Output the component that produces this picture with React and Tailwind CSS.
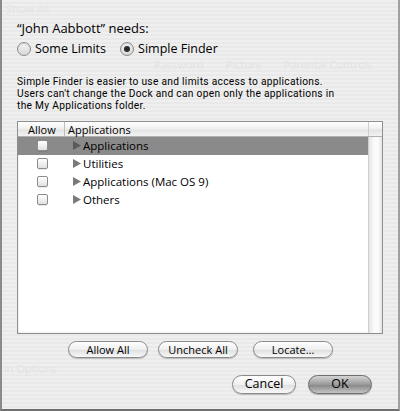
import React from "react";

const font = { fontFamily: '"Lucida Grande", "Open Sans", "DejaVu Sans", sans-serif' };

const rows = [
  { name: "Applications", selected: true },
  { name: "Utilities" },
  { name: "Applications (Mac OS 9)" },
  { name: "Others" },
];

function Radio({ checked, label }) {
  return (
    <div className="flex items-center gap-[4px]">
      <span className="w-[14px] h-[14px] rounded-full border border-[#8c8c8c] bg-[linear-gradient(#f4f4f4,#d8d8d8)] flex items-center justify-center shadow-[inset_0_1px_1px_rgba(0,0,0,0.15)]">
        {checked && <span className="w-[6px] h-[6px] rounded-full bg-[#2a2a2a]" />}
      </span>
      <span className="text-[12.5px] text-black">{label}</span>
    </div>
  );
}

function PillButton({ children, w, h = 17, primary }) {
  return (
    <button
      className={
        "rounded-full border text-[11px] leading-none text-black flex items-center justify-center " +
        (primary
          ? "border-[#6e6e6e] bg-[linear-gradient(#d4d4d4,#9a9a9a_50%,#8a8a8a_55%,#c4c4c4)] shadow-[0_1px_1px_rgba(0,0,0,0.25)]"
          : "border-[#8a8a8a] bg-[linear-gradient(#ffffff,#efefef_50%,#e0e0e0_55%,#f8f8f8)] shadow-[0_1px_1px_rgba(0,0,0,0.2)]")
      }
      style={{ width: w, height: h }}
    >
      {children}
    </button>
  );
}

export default function App() {
  return (
    <div
      style={font}
      className="relative w-[400px] h-[411px] overflow-hidden bg-[repeating-linear-gradient(#efefef_0px,#efefef_2px,#e9e9e9_2px,#e9e9e9_4px)] border-l-2 border-r-2 border-b-2 border-l-[#8a8a8a] border-r-[#a0a0a0] border-b-[#6f6f6f]"
    >
      {/* faint text of the window behind the sheet */}
      <div className="absolute inset-0 text-[#e3e3e3] pointer-events-none select-none">
        <div className="absolute left-[4px] top-[2px] text-[11px] leading-[14px]">Show All</div>
        <div className="absolute left-[152px] top-[59px] text-[11px] leading-[12px] flex gap-[22px]">
          <span>Password</span>
          <span>Picture</span>
          <span>Parental Controls</span>
        </div>
        <div className="absolute left-[2px] top-[362px] text-[11px] leading-[14px]">in Options</div>
      </div>

      <div className="relative flex flex-col pl-[15px] pr-[15px] pt-[20px]">
        <div className="text-[13px] leading-[16px] text-black">“John Aabbott” needs:</div>

        <div className="flex items-center gap-[14px] mt-[4px]">
          <Radio label="Some Limits" />
          <Radio checked label="Simple Finder" />
        </div>

        <div
          className="mt-[17px] text-[10.2px] leading-[12px] tracking-[0.3px] text-black"
          style={{ fontFamily: 'Roboto, "Liberation Sans", sans-serif' }}
        >
          <div>Simple Finder is easier to use and limits access to applications.</div>
          <div>Users can't change the Dock and can open only the applications in</div>
          <div>the My Applications folder.</div>
        </div>

        {/* table */}
        <div className="mt-[9px] w-[366px] h-[213px] border border-[#8e8e8e] bg-white flex flex-col shadow-[inset_0_0_2px_rgba(0,0,0,0.2)]">
          <div className="h-[15px] flex items-stretch text-[11px] leading-[15px] text-black bg-[linear-gradient(#ffffff,#f0f0f0_50%,#e4e4e4_55%,#f2f2f2)] border-b border-[#b0b0b0]">
            <div className="w-[47px] pl-[10px] border-r border-[#bdbdbd]">Allow</div>
            <div className="flex-1 pl-[3px]">Applications</div>
            <div className="w-[14px] border-l border-[#cfcfcf]" />
          </div>
          <div className="flex-1 flex">
            <div className="flex-1 flex flex-col">
              {rows.map((r) => (
                <div
                  key={r.name}
                  className={
                    "h-[18px] flex items-center text-[11.5px] text-black " +
                    (r.selected ? "bg-[#8a8a8a]" : "")
                  }
                >
                  <div className="w-[47px] flex justify-center pl-[2px]">
                    <span className="w-[11px] h-[11px] rounded-[2px] border border-[#8c8c8c] bg-[linear-gradient(#ffffff,#e2e2e2)] shadow-[0_1px_0_rgba(0,0,0,0.08)]" />
                  </div>
                  <svg width="8" height="9" viewBox="0 0 8 9" className="ml-[8px]">
                    <path d="M0 0 L8 4.5 L0 9 Z" fill={r.selected ? "#5a5a5a" : "#7a7a7a"} />
                  </svg>
                  <span className="ml-[2px]">{r.name}</span>
                </div>
              ))}
            </div>
            <div className="w-[14px] border-l border-[#cfcfcf] bg-[linear-gradient(90deg,#e6e6e6,#fbfbfb_40%,#fbfbfb_70%,#e4e4e4)]" />
          </div>
        </div>

        <div className="flex mt-[7px] pl-[51px] gap-[10px]">
          <PillButton w={80}>Allow All</PillButton>
          <PillButton w={80}>Uncheck All</PillButton>
          <div className="ml-[5px]">
            <PillButton w={80}>Locate…</PillButton>
          </div>
        </div>

        <div className="flex justify-end mt-[17px] pr-[11px] gap-[12px]">
          <PillButton w={64} h={19}>
            <span className="text-[12.5px]">Cancel</span>
          </PillButton>
          <PillButton w={64} h={19} primary>
            <span className="text-[12.5px]">OK</span>
          </PillButton>
        </div>
      </div>
    </div>
  );
}
